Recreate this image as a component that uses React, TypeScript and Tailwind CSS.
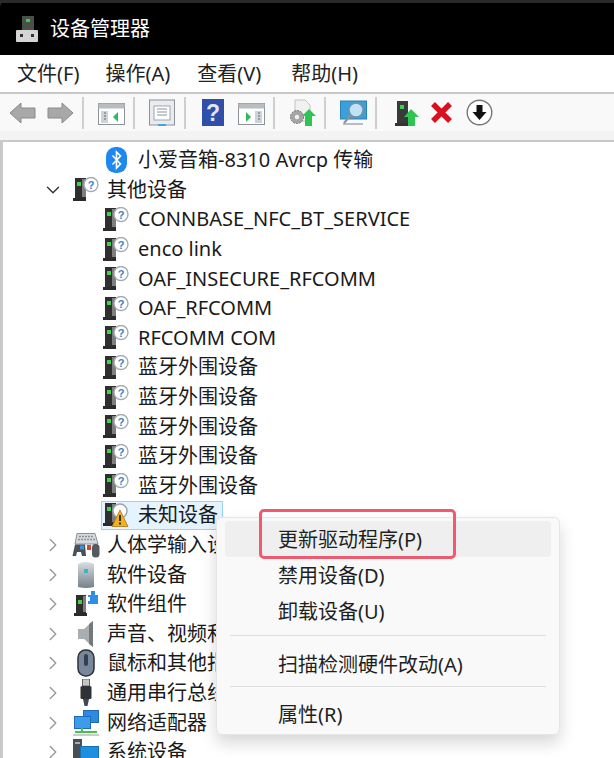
import React from 'react';
import { ChevronDown, ChevronRight } from 'lucide-react';

const font = "font-['Noto_Sans','Noto_Sans_CJK_SC',sans-serif]";

const Tower: React.FC = () => (
  <>
    <rect x="2" y="1" width="11" height="20" fill="#2f2f2f" />
    <rect x="9" y="2" width="4" height="18" fill="#7e7e7e" />
    <rect x="4" y="5" width="4" height="4" fill="#3fd24a" />
    <rect x="0" y="21" width="13" height="3" fill="#2b2b2b" />
  </>
);

const UnknownIcon: React.FC = () => (
  <svg width="26" height="25" viewBox="0 0 26 25">
    <Tower />
    <circle cx="18" cy="7.5" r="7" fill="#fff" stroke="#a3abb3" strokeWidth="1.4" />
    <text x="18" y="11.5" textAnchor="middle" fontSize="11" fontWeight="700" fill="#3d7fc4" fontFamily="Liberation Sans">?</text>
  </svg>
);

const WarnIcon: React.FC = () => (
  <svg width="26" height="26" viewBox="0 0 26 26">
    <Tower />
    <circle cx="17" cy="9" r="7" fill="#fff" stroke="#9aa3ab" strokeWidth="1.4" />
    <path d="M17 8 L25 24.5 H9 Z" fill="#f2b01e" stroke="#a9780f" strokeWidth="0.8" />
    <rect x="16.1" y="13" width="1.8" height="6" fill="#222" />
    <rect x="16.1" y="20.5" width="1.8" height="2" fill="#222" />
  </svg>
);

const BluetoothIcon: React.FC = () => (
  <svg width="21" height="26" viewBox="0 0 21 26" className="ml-[3px]">
    <rect x="0" y="0" width="21" height="26" rx="9.5" fill="#1e88f0" />
    <path d="M6.5 8.5 L14.5 17 L10.5 21 V5 L14.5 9 L6.5 17.5" fill="none" stroke="#fff" strokeWidth="1.6" />
  </svg>
);

const HidIcon: React.FC = () => (
  <svg width="28" height="25" viewBox="0 0 28 25">
    <path d="M5 0.5 H23 L26 11 H3 Z" fill="#d7dadd" stroke="#8b9096" />
    <path d="M7 3.5 H22 M6 6.5 H23" stroke="#8b9096" strokeWidth="1.4" strokeDasharray="2 1" />
    <path d="M0.5 23 L3 11.5 H13 L14 23 H10 L9 19 H5 L4 23 Z" fill="#4c5055" />
    <rect x="8" y="12.5" width="4" height="4" fill="#3a8fe0" />
    <rect x="20" y="11" width="7.5" height="13.5" rx="3.5" fill="#565b61" />
    <rect x="15" y="12" width="4" height="5" fill="#d04a3a" />
  </svg>
);

const SoftwareIcon: React.FC = () => (
  <svg width="18" height="28" viewBox="0 0 18 28">
    <defs>
      <linearGradient id="sw" x1="0" y1="0" x2="0" y2="1">
        <stop offset="0" stopColor="#d9dde0" />
        <stop offset="1" stopColor="#76818b" />
      </linearGradient>
    </defs>
    <path d="M1 3 Q9 -1 17 3 V26 Q9 28 1 26 Z" fill="url(#sw)" />
    <rect x="7" y="8" width="4" height="4" fill="#3bb6c4" />
  </svg>
);

const ComponentIcon: React.FC = () => (
  <svg width="24" height="26" viewBox="0 0 24 26">
    <rect x="2" y="4" width="10" height="18" fill="#2f2f2f" />
    <rect x="9" y="5" width="3" height="16" fill="#7e7e7e" />
    <rect x="4" y="9" width="4" height="4" fill="#3fd24a" />
    <rect x="0" y="22" width="13" height="3" fill="#2b2b2b" />
    <rect x="14" y="4" width="10" height="9" fill="#2f8fe6" />
    <rect x="17" y="0" width="4" height="5" fill="#2f8fe6" />
    <rect x="13" y="6" width="3" height="4" fill="#fff" />
  </svg>
);

const SpeakerIcon: React.FC = () => (
  <svg width="16" height="26" viewBox="0 0 16 26">
    <path d="M0 8 H6 L15 0 V26 L6 18 H0 Z" fill="#a9aeb3" />
    <path d="M11 3 L15 0 V26 L11 23 Z" fill="#75797d" />
  </svg>
);

const MouseIcon: React.FC = () => (
  <svg width="18" height="28" viewBox="0 0 18 28">
    <rect x="1" y="1" width="16" height="26" rx="7.5" fill="#78889a" stroke="#2d3238" strokeWidth="1.5" />
    <rect x="7" y="5" width="4" height="12" rx="2" fill="#34404c" />
  </svg>
);

const UsbIcon: React.FC = () => (
  <svg width="14" height="28" viewBox="0 0 14 28">
    <rect x="3.5" y="0" width="7" height="7" fill="#c4c7ca" stroke="#666" />
    <rect x="1.5" y="7" width="11" height="13" rx="1.5" fill="#303336" />
    <path d="M4 20 H10 L8.5 27 H5.5 Z" fill="#45484b" />
  </svg>
);

const NetworkIcon: React.FC = () => (
  <svg width="26" height="26" viewBox="0 0 26 26">
    <rect x="10.5" y="0.5" width="15" height="12" fill="#2d8ae0" stroke="#1e6cb8" />
    <rect x="1.5" y="6.5" width="16" height="12" fill="#3d9bee" stroke="#1e6cb8" />
    <path d="M9 18 V22 M2 22 H24" stroke="#48c04a" strokeWidth="2" />
    <rect x="0" y="24" width="26" height="2" fill="#c9cdd0" />
  </svg>
);

const SystemIcon: React.FC = () => (
  <svg width="26" height="26" viewBox="0 0 26 26">
    <rect x="0" y="0" width="9" height="22" fill="#4a4f54" />
    <rect x="2" y="3" width="5" height="2" fill="#a8adb2" />
    <rect x="7.5" y="7.5" width="18" height="17" fill="#1f8fe0" stroke="#176fb0" />
  </svg>
);

type Row = { label: string; icon: React.ReactNode; indent: 'top' | 'child'; arrow?: 'open' | 'closed'; selected?: boolean };

const rows: Row[] = [
  { label: '小爱音箱-8310 Avrcp 传输', icon: <BluetoothIcon />, indent: 'child' },
  { label: '其他设备', icon: <UnknownIcon />, indent: 'top', arrow: 'open' },
  { label: 'CONNBASE_NFC_BT_SERVICE', icon: <UnknownIcon />, indent: 'child' },
  { label: 'enco link', icon: <UnknownIcon />, indent: 'child' },
  { label: 'OAF_INSECURE_RFCOMM', icon: <UnknownIcon />, indent: 'child' },
  { label: 'OAF_RFCOMM', icon: <UnknownIcon />, indent: 'child' },
  { label: 'RFCOMM COM', icon: <UnknownIcon />, indent: 'child' },
  { label: '蓝牙外围设备', icon: <UnknownIcon />, indent: 'child' },
  { label: '蓝牙外围设备', icon: <UnknownIcon />, indent: 'child' },
  { label: '蓝牙外围设备', icon: <UnknownIcon />, indent: 'child' },
  { label: '蓝牙外围设备', icon: <UnknownIcon />, indent: 'child' },
  { label: '蓝牙外围设备', icon: <UnknownIcon />, indent: 'child' },
  { label: '未知设备', icon: <WarnIcon />, indent: 'child', selected: true },
  { label: '人体学输入设备', icon: <HidIcon />, indent: 'top', arrow: 'closed' },
  { label: '软件设备', icon: <SoftwareIcon />, indent: 'top', arrow: 'closed' },
  { label: '软件组件', icon: <ComponentIcon />, indent: 'top', arrow: 'closed' },
  { label: '声音、视频和游戏控制器', icon: <SpeakerIcon />, indent: 'top', arrow: 'closed' },
  { label: '鼠标和其他指针设备', icon: <MouseIcon />, indent: 'top', arrow: 'closed' },
  { label: '通用串行总线控制器', icon: <UsbIcon />, indent: 'top', arrow: 'closed' },
  { label: '网络适配器', icon: <NetworkIcon />, indent: 'top', arrow: 'closed' },
  { label: '系统设备', icon: <SystemIcon />, indent: 'top', arrow: 'closed' },
];

const TreeRow: React.FC<{ row: Row }> = ({ row }) => (
  <div className={`flex h-[29.6px] shrink-0 items-center ${row.indent === 'child' ? 'pl-[98px]' : 'pl-[38px]'}`}>
    {row.indent === 'top' && (
      <div className="flex w-[24px] justify-center">
        {row.arrow === 'open' ? (
          <ChevronDown size={22} strokeWidth={1.5} className="text-[#333]" />
        ) : (
          <ChevronRight size={22} strokeWidth={1.5} className="text-[#999]" />
        )}
      </div>
    )}
    <div
      className={`flex h-[29px] items-center border pr-[4px] ${
        row.selected ? 'border-[#99d1ff] bg-[#e5f3ff]' : 'border-transparent'
      }`}
    >
      <div
        className={`flex shrink-0 items-center ${
          row.indent === 'child' ? 'w-[34px] justify-start pl-px' : 'w-[39px] justify-center'
        }`}
      >
        {row.icon}
      </div>
      <span className="whitespace-nowrap pl-[2px] text-[20px] leading-none text-[#1a1a1a]">{row.label}</span>
    </div>
  </div>
);

const Sep: React.FC<{ className?: string }> = ({ className = 'ml-[8px] mr-[14px]' }) => (
  <div className={`h-[32px] w-[2px] shrink-0 bg-[#cfcfcf] ${className}`} />
);

const WindowIcon: React.FC<{ side: 'left' | 'right' }> = ({ side }) => (
  <svg width="27" height="24" viewBox="0 0 27 24" className="mt-[3px]">
    <rect x="0.5" y="1.5" width="26" height="21" fill="#fff" stroke="#8b9298" />
    <rect x="0.5" y="1.5" width="26" height="5" fill="#b8bdc2" />
    <rect x={side === 'left' ? 3 : 17} y="9" width="7" height="12" fill="#cdd3d8" />
    <path d="M6 11 H8 M6 14 H8 M6 17 H8" stroke="#667" transform={side === 'left' ? '' : 'translate(14 0)'} />
    <path d={side === 'left' ? 'M20 10 L15 15 L20 20 Z' : 'M8 10 L13 15 L8 20 Z'} fill="#2dbb5d" />
  </svg>
);

const Toolbar: React.FC = () => (
  <div className="flex h-[37px] shrink-0 items-center bg-[#f9f9f9] pl-[9px]">
    <svg width="27" height="24" viewBox="0 0 27 24">
      <path d="M1 12 L12 2 V7 H26 V17 H12 V22 Z" fill="#a8a8a8" stroke="#8a8a8a" />
    </svg>
    <svg width="27" height="24" viewBox="0 0 27 24" className="ml-[11px]">
      <path d="M26 12 L15 2 V7 H1 V17 H15 V22 Z" fill="#a8a8a8" stroke="#8a8a8a" />
    </svg>
    <Sep />
    <WindowIcon side="left" />
    <Sep />
    <svg width="26" height="28" viewBox="0 0 26 28">
      <rect x="0.5" y="1" width="25" height="25" fill="#e9ebee" stroke="#8b9298" />
      <rect x="5" y="7" width="16" height="14" fill="#fff" stroke="#a0a6ac" />
      <path d="M8 10 H18 M8 13 H18 M8 16 H18" stroke="#8b9298" />
      <rect x="9" y="25" width="8" height="2" fill="#3fa5e8" />
    </svg>
    <Sep className="ml-[9px] mr-[16px]" />
    <svg width="22" height="27" viewBox="0 0 22 27">
      <rect width="22" height="27" fill="#2f4fa8" />
      <text x="11" y="22" textAnchor="middle" fontSize="23" fontWeight="700" fill="#dfe6f5" fontFamily="Liberation Sans">?</text>
    </svg>
    <div className="ml-[14px] flex"><WindowIcon side="right" /></div>
    <Sep />
    <svg width="27" height="28" viewBox="0 0 27 28">
      <path d="M6 1 H16 L21 6 V22 H6 Z" fill="#f1f1f1" stroke="#c4c4c4" />
      <circle cx="8" cy="18" r="6.5" fill="#a5a5a5" stroke="#777" strokeDasharray="2 1" />
      <circle cx="8" cy="18" r="2.2" fill="#f1f1f1" />
      <path d="M20 10 L27 17 H23 V27 H16 V17 H13 Z" fill="#2dc653" />
    </svg>
    <Sep />
    <svg width="27" height="28" viewBox="0 0 27 28">
      <rect x="0.5" y="2" width="26" height="18" fill="#3aa0da" stroke="#2a82b5" />
      <rect x="3" y="24" width="20" height="2" fill="#b9bdc1" />
      <circle cx="16" cy="11" r="7" fill="#bfe2f6" stroke="#7d8f9a" strokeWidth="1.4" />
      <path d="M11 16 L4 24" stroke="#8d9296" strokeWidth="2" />
    </svg>
    <Sep className="ml-[8px] mr-[18px]" />
    <svg width="24" height="28" viewBox="0 0 24 28">
      <rect x="2" y="2" width="11" height="22" fill="#3a3a3a" />
      <rect x="5" y="6" width="4" height="4" fill="#38d14a" />
      <rect x="0" y="24" width="14" height="3" fill="#333" />
      <path d="M16 10 L24 18 H20 V27 H13 V18 H9 Z" fill="#2dc653" />
    </svg>
    <svg width="23" height="23" viewBox="0 0 23 23" className="ml-[11px]">
      <path d="M3 3 L20 20 M20 3 L3 20" stroke="#d9111e" strokeWidth="5.5" />
    </svg>
    <svg width="27" height="27" viewBox="0 0 27 27" className="ml-[13px]">
      <circle cx="13.5" cy="13.5" r="12.3" fill="#fff" stroke="#777" strokeWidth="1.4" />
      <path d="M10.5 6 H16.5 V13 H20.5 L13.5 21 L6.5 13 H10.5 Z" fill="#111" />
    </svg>
  </div>
);

const MenuItem: React.FC<{ label: string; hot?: boolean }> = ({ label, hot }) => (
  <div className={`mx-[8px] flex h-[36px] items-center rounded-[4px] pl-[53px] pt-[2px] text-[20px] text-[#1f1f1f] ${hot ? 'bg-[#efefef]' : ''}`}>
    {label}
  </div>
);

const ContextMenu: React.FC = () => (
  <div className="absolute left-[216px] top-[517px] w-[344px] rounded-[6px] border border-[#e6e6e6] bg-[#f9f9f9] pb-[2px] pt-[3px] shadow-[0_8px_16px_rgba(0,0,0,0.16)]">
    <MenuItem label="更新驱动程序(P)" hot />
    <MenuItem label="禁用设备(D)" />
    <MenuItem label="卸载设备(U)" />
    <div className="mx-[13px] mb-[10px] mt-[6px] h-px bg-[#dedede]" />
    <MenuItem label="扫描检测硬件改动(A)" />
    <div className="mx-[13px] mb-[9px] mt-[4px] h-px bg-[#dedede]" />
    <MenuItem label="属性(R)" />
  </div>
);

export default function App() {
  return (
    <div className={`relative h-[758px] w-[614px] overflow-hidden bg-[#2a2a2a] ${font}`}>
      <div className="flex h-full flex-col overflow-hidden rounded-tl-[8px] pt-[3px]">
        <div className="flex h-[52px] shrink-0 items-center bg-black pl-[16px]">
          <svg width="24" height="26" viewBox="0 0 24 26">
            <rect x="6" y="0" width="12" height="14" fill="#4a4f4a" />
            <rect x="10" y="3" width="4" height="3" fill="#35d04a" />
            <rect x="0" y="14" width="22" height="12" rx="1" fill="#d5d5d5" />
            <rect x="4" y="18" width="3" height="3" fill="#333" />
            <rect x="15" y="18" width="3" height="3" fill="#333" />
          </svg>
          <span className="ml-[10px] text-[20px] leading-none text-white">设备管理器</span>
        </div>
        <div className="flex h-[37px] shrink-0 items-center bg-white pl-[17px] text-[20px] text-[#222]">
          <span>文件(F)</span>
          <span className="ml-[26px]">操作(A)</span>
          <span className="ml-[27px]">查看(V)</span>
          <span className="ml-[30px]">帮助(H)</span>
        </div>
        <div className="h-[2px] shrink-0 bg-[#c8c8c8]" />
        <Toolbar />
        <div className="h-[9px] shrink-0 bg-[#f3f3f3]" />
        <div className="flex min-h-0 flex-1 flex-col border-l-[3px] border-t-[2px] border-[#c9c9c9] bg-white pt-[3.5px]">
          {rows.map((row, i) => (
            <TreeRow key={i} row={row} />
          ))}
        </div>
      </div>
      <ContextMenu />
      <div className="absolute left-[259px] top-[509px] h-[50px] w-[197px] rounded-[5px] border-[3px] border-[#f0596e]" />
    </div>
  );
}
